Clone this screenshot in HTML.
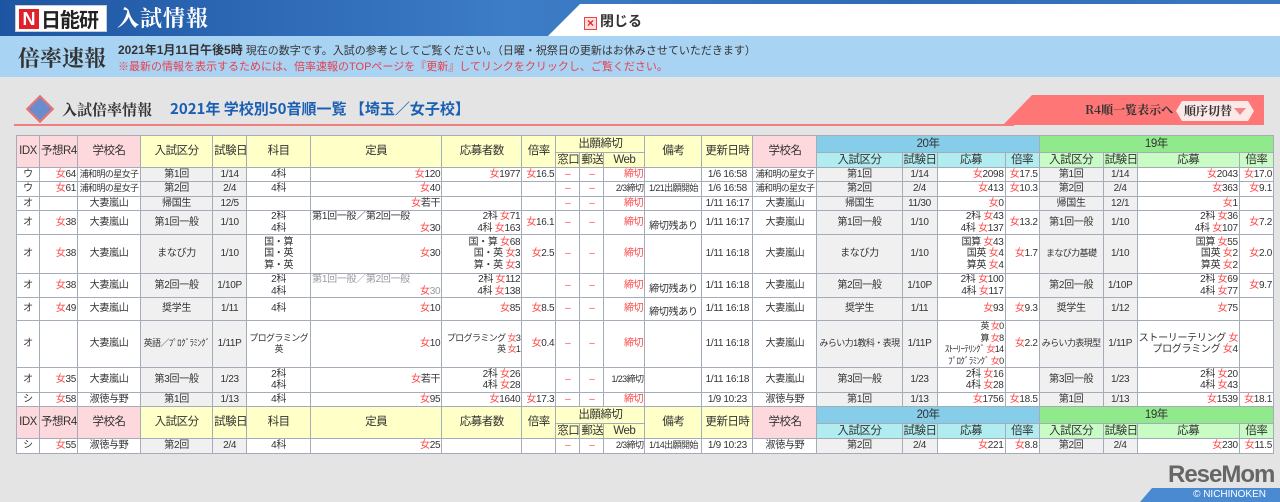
<!DOCTYPE html>
<html><head><meta charset="utf-8">
<style>
*{margin:0;padding:0;box-sizing:border-box}
body{width:1280px;height:502px;overflow:hidden;background:#e4e4e4;font-family:"Liberation Sans","Noto Sans CJK JP",sans-serif;color:#333;position:relative}
.top{position:absolute;left:0;top:0;width:1280px;height:36px;background:linear-gradient(90deg,#1d55a3,#3d7cc6 40%,#2f6bb6 70%,#3b78c2)}
.logo{position:absolute;left:15px;top:5px;width:92px;height:27px;background:#fff;border:1px solid #ccc}
.logo .n{position:absolute;left:3px;top:3px;width:20px;height:20px;background:#e0202a;color:#fff;font:bold 18px/20px "Liberation Sans",sans-serif;text-align:center}
.logo .t{position:absolute;left:25px;top:1px;font:bold 20px/24px "Noto Sans CJK JP",sans-serif;color:#222;letter-spacing:-1px}
.ttl{position:absolute;left:117px;top:3px;color:#fff;font:bold 22px/30px "Noto Serif CJK SC","Noto Sans CJK JP",serif;letter-spacing:1px}
.tab{position:absolute;left:548px;top:4px;width:732px;height:32px;background:#fff;clip-path:polygon(32px 0,100% 0,100% 100%,0 100%)}
.close{position:absolute;left:584px;top:12px;font:bold 14px/18px "Noto Sans CJK JP",sans-serif;color:#333}
.close i{display:inline-block;width:13px;height:13px;border:1px solid #e44;background:#fdd;color:#e22;font:bold 12px/11px sans-serif;text-align:center;font-style:normal;vertical-align:-1px;margin-right:3px}
.band{position:absolute;left:0;top:36px;width:1280px;height:41px;background:#a9d3f3}
.bs{position:absolute;left:18px;top:44px;font:bold 22px/28px "Noto Serif CJK SC",serif;color:#333}
.l1{position:absolute;left:118px;top:43px;font-size:11px;line-height:14px;color:#333;white-space:nowrap}
.l1 b{font-size:12px}
.l2{position:absolute;left:118px;top:60px;font-size:11px;line-height:14px;color:#e8404f;white-space:nowrap}
.h2{position:absolute;left:30px;top:96px;white-space:nowrap}
.dia{position:absolute;left:0;top:3px;width:20px;height:20px;background:#6a8ccc;transform:rotate(45deg);border:2px solid #f07070}
.h2 .a{position:absolute;left:32px;top:3px;font:bold 15px/22px "Noto Serif CJK SC",serif;color:#333}
.h2 .b{position:absolute;left:140px;top:2px;font:bold 15px/22px "Noto Sans CJK JP",sans-serif;color:#1a5fb4}
.uline{position:absolute;left:14px;top:124px;width:1000px;height:2px;background:#f08080}
.ptab{position:absolute;left:1003px;top:95px;width:261px;height:30px;background:#ff7676;clip-path:polygon(29px 0,100% 0,100% 100%,0 100%)}
.ptab span{position:absolute;left:82px;top:7px;font:bold 12px/16px "Noto Serif CJK SC",serif;color:#333}
.btn{position:absolute;left:173px;top:6px;width:78px;height:20px;background:#fde8e8;clip-path:polygon(6px 0,calc(100% - 6px) 0,100% 50%,calc(100% - 6px) 100%,6px 100%,0 50%);font:bold 12px/20px "Noto Serif CJK SC",serif;color:#333;padding-left:8px}
.btn:after{content:"";position:absolute;right:8px;top:7px;border:6px solid transparent;border-top:7px solid #f08888;border-bottom:0}
table{position:absolute;left:16px;top:135px;border-collapse:collapse;table-layout:fixed;width:1258px;font-size:10px;line-height:11.5px;background:#fff;letter-spacing:-0.3px}
td,th{border:1px solid #a4acba;padding:0 1px;white-space:nowrap;overflow:hidden;text-align:center;font-weight:normal}
th{font-size:11.5px;line-height:13px;letter-spacing:-0.5px}
.pk{background:#fdd8dc}.yl{background:#ffffc8}.b1{background:#86cdea}.b2{background:#b0ecf0}.g1{background:#90ea8c}.g2{background:#c8fcc4}
.gr{background:#f0f0f0}
.r{color:#ff4a4a}
.rt{text-align:right}
.gy{color:#999}
.dt{text-align:left;vertical-align:top}
.bt{vertical-align:bottom;padding-bottom:2px}
.sm{font-size:9px;letter-spacing:-0.6px}
.rm{position:absolute;left:1168px;top:462px;font:bold 24px/26px "Liberation Sans",sans-serif;color:#666;letter-spacing:-1px}
.nk{position:absolute;left:1140px;top:488px;width:140px;height:14px;background:#4a8ad0;clip-path:polygon(12px 0,100% 0,100% 100%,0 100%);color:#fff;font-size:10px;line-height:14px;text-align:right;padding-right:14px}
</style></head><body>
<div class="top"></div>
<div class="logo"><div class="n">N</div><div class="t">日能研</div></div>
<div class="ttl">入試情報</div>
<div class="tab"></div>
<div class="close"><i>×</i>閉じる</div>
<div class="band"></div>
<div class="bs">倍率速報</div>
<div class="l1"><b>2021年1月11日午後5時</b> 現在の数字です。入試の参考としてご覧ください。（日曜・祝祭日の更新はお休みさせていただきます）</div>
<div class="l2">※最新の情報を表示するためには、倍率速報のTOPページを『更新』してリンクをクリックし、ご覧ください。</div>
<div class="h2"><div class="dia"></div><div class="a">入試倍率情報</div><div class="b">2021年 学校別50音順一覧 【埼玉／女子校】</div></div>
<div class="uline"></div>
<div class="ptab"><span>R4順一覧表示へ</span><div class="btn">順序切替</div></div>

<table>
<colgroup><col style="width:23px"><col style="width:38px"><col style="width:63px"><col style="width:72px"><col style="width:34px"><col style="width:64px"><col style="width:131px"><col style="width:80px"><col style="width:34px"><col style="width:24px"><col style="width:24px"><col style="width:41px"><col style="width:57px"><col style="width:51px"><col style="width:64px"><col style="width:85px"><col style="width:35px"><col style="width:68px"><col style="width:34px"><col style="width:64px"><col style="width:34px"><col style="width:102px"><col style="width:34px"></colgroup>
<tr style="height:17px"><th rowspan="2" class="pk">IDX</th><th rowspan="2" class="pk">予想R4</th><th rowspan="2" class="pk">学校名</th><th rowspan="2" class="yl">入試区分</th><th rowspan="2" class="yl">試験日</th><th rowspan="2" class="yl">科目</th><th rowspan="2" class="yl">定員</th><th rowspan="2" class="yl">応募者数</th><th rowspan="2" class="yl">倍率</th><th colspan="3" class="yl">出願締切</th><th rowspan="2" class="yl">備考</th><th rowspan="2" class="yl">更新日時</th><th rowspan="2" class="pk">学校名</th><th colspan="4" class="b1">20年</th><th colspan="4" class="g1">19年</th></tr>
<tr style="height:15px"><th class="yl">窓口</th><th class="yl">郵送</th><th class="yl">Web</th><th class="b2">入試区分</th><th class="b2">試験日</th><th class="b2">応募</th><th class="b2">倍率</th><th class="g2">入試区分</th><th class="g2">試験日</th><th class="g2">応募</th><th class="g2">倍率</th></tr>

<tr style="height:14px"><td>ウ</td><td class="rt"><span class="r">女</span>64</td><td class="sm">浦和明の星女子</td><td class="gr">第1回</td><td class="gr">1/14</td><td>4科</td><td class="rt"><span class="r">女</span>120</td><td class="rt"><span class="r">女</span>1977</td><td class="rt"><span class="r">女</span>16.5</td><td class="r">–</td><td class="r">–</td><td class="rt r">締切</td><td></td><td>1/6 16:58</td><td class="sm">浦和明の星女子</td><td class="gr">第1回</td><td class="gr">1/14</td><td class="rt"><span class="r">女</span>2098</td><td class="rt"><span class="r">女</span>17.5</td><td class="gr">第1回</td><td class="gr">1/14</td><td class="rt"><span class="r">女</span>2043</td><td class="rt"><span class="r">女</span>17.0</td></tr>
<tr style="height:15px"><td>ウ</td><td class="rt"><span class="r">女</span>61</td><td class="sm">浦和明の星女子</td><td class="gr">第2回</td><td class="gr">2/4</td><td>4科</td><td class="rt"><span class="r">女</span>40</td><td></td><td></td><td class="r">–</td><td class="r">–</td><td class="rt sm">2/3締切</td><td class="sm">1/21出願開始</td><td>1/6 16:58</td><td class="sm">浦和明の星女子</td><td class="gr">第2回</td><td class="gr">2/4</td><td class="rt"><span class="r">女</span>413</td><td class="rt"><span class="r">女</span>10.3</td><td class="gr">第2回</td><td class="gr">2/4</td><td class="rt"><span class="r">女</span>363</td><td class="rt"><span class="r">女</span>9.1</td></tr>
<tr style="height:14px"><td>オ</td><td></td><td>大妻嵐山</td><td class="gr">帰国生</td><td class="gr">12/5</td><td></td><td class="rt"><span class="r">女</span>若干</td><td></td><td></td><td class="r">–</td><td class="r">–</td><td class="rt r">締切</td><td></td><td>1/11 16:17</td><td>大妻嵐山</td><td class="gr">帰国生</td><td class="gr">11/30</td><td class="rt"><span class="r">女</span>0</td><td></td><td class="gr">帰国生</td><td class="gr">12/1</td><td class="rt"><span class="r">女</span>1</td><td></td></tr>
<tr style="height:24px"><td>オ</td><td class="rt"><span class="r">女</span>38</td><td>大妻嵐山</td><td class="gr">第1回一般</td><td class="gr">1/10</td><td>2科<br>4科</td><td class="dt">第1回一般／第2回一般<div class="rt"><span class="r">女</span>30</div></td><td class="rt">2科 <span class="r">女</span>71<br>4科 <span class="r">女</span>163</td><td class="rt"><span class="r">女</span>16.1</td><td class="r">–</td><td class="r">–</td><td class="rt r">締切</td><td class="bt">締切残あり</td><td>1/11 16:17</td><td>大妻嵐山</td><td class="gr">第1回一般</td><td class="gr">1/10</td><td class="rt">2科 <span class="r">女</span>43<br>4科 <span class="r">女</span>137</td><td class="rt"><span class="r">女</span>13.2</td><td class="gr">第1回一般</td><td class="gr">1/10</td><td class="rt">2科 <span class="r">女</span>36<br>4科 <span class="r">女</span>107</td><td class="rt"><span class="r">女</span>7.2</td></tr>
<tr style="height:39px"><td>オ</td><td class="rt"><span class="r">女</span>38</td><td>大妻嵐山</td><td class="gr">まなび力</td><td class="gr">1/10</td><td>国・算<br>国・英<br>算・英</td><td class="rt"><span class="r">女</span>30</td><td class="rt">国・算 <span class="r">女</span>68<br>国・英 <span class="r">女</span>3<br>算・英 <span class="r">女</span>3</td><td class="rt"><span class="r">女</span>2.5</td><td class="r">–</td><td class="r">–</td><td class="rt r">締切</td><td></td><td>1/11 16:18</td><td>大妻嵐山</td><td class="gr">まなび力</td><td class="gr">1/10</td><td class="rt">国算 <span class="r">女</span>43<br>国英 <span class="r">女</span>4<br>算英 <span class="r">女</span>4</td><td class="rt"><span class="r">女</span>1.7</td><td class="gr sm">まなび力基礎</td><td class="gr">1/10</td><td class="rt">国算 <span class="r">女</span>55<br>国英 <span class="r">女</span>2<br>算英 <span class="r">女</span>2</td><td class="rt"><span class="r">女</span>2.0</td></tr>
<tr style="height:24px"><td>オ</td><td class="rt"><span class="r">女</span>38</td><td>大妻嵐山</td><td class="gr">第2回一般</td><td class="gr">1/10P</td><td>2科<br>4科</td><td class="dt gy">第1回一般／第2回一般<div class="rt"><span class="r">女</span>30</div></td><td class="rt">2科 <span class="r">女</span>112<br>4科 <span class="r">女</span>138</td><td></td><td class="r">–</td><td class="r">–</td><td class="rt r">締切</td><td class="bt">締切残あり</td><td>1/11 16:18</td><td>大妻嵐山</td><td class="gr">第2回一般</td><td class="gr">1/10P</td><td class="rt">2科 <span class="r">女</span>100<br>4科 <span class="r">女</span>117</td><td></td><td class="gr">第2回一般</td><td class="gr">1/10P</td><td class="rt">2科 <span class="r">女</span>69<br>4科 <span class="r">女</span>77</td><td class="rt"><span class="r">女</span>9.7</td></tr>
<tr style="height:23px"><td>オ</td><td class="rt"><span class="r">女</span>49</td><td>大妻嵐山</td><td class="gr">奨学生</td><td class="gr">1/11</td><td>4科</td><td class="rt"><span class="r">女</span>10</td><td class="rt"><span class="r">女</span>85</td><td class="rt"><span class="r">女</span>8.5</td><td class="r">–</td><td class="r">–</td><td class="rt r">締切</td><td class="bt">締切残あり</td><td>1/11 16:18</td><td>大妻嵐山</td><td class="gr">奨学生</td><td class="gr">1/11</td><td class="rt"><span class="r">女</span>93</td><td class="rt"><span class="r">女</span>9.3</td><td class="gr">奨学生</td><td class="gr">1/12</td><td class="rt"><span class="r">女</span>75</td><td></td></tr>
<tr style="height:47px"><td>オ</td><td></td><td>大妻嵐山</td><td class="gr sm">英語／ﾌﾟﾛｸﾞﾗﾐﾝｸﾞ</td><td class="gr">1/11P</td><td class="sm">プログラミング<br>英</td><td class="rt"><span class="r">女</span>10</td><td class="rt sm">プログラミング <span class="r">女</span>3<br>英 <span class="r">女</span>1</td><td class="rt"><span class="r">女</span>0.4</td><td class="r">–</td><td class="r">–</td><td class="rt r">締切</td><td></td><td>1/11 16:18</td><td>大妻嵐山</td><td class="gr sm">みらい力1教科・表現</td><td class="gr">1/11P</td><td class="rt sm">英 <span class="r">女</span>0<br>算 <span class="r">女</span>8<br>ｽﾄｰﾘｰﾃﾘﾝｸﾞ <span class="r">女</span>14<br>ﾌﾟﾛｸﾞﾗﾐﾝｸﾞ <span class="r">女</span>0</td><td class="rt"><span class="r">女</span>2.2</td><td class="gr sm">みらい力表現型</td><td class="gr">1/11P</td><td class="rt">ストーリーテリング <span class="r">女</span>12<br>プログラミング <span class="r">女</span>4</td><td></td></tr>
<tr style="height:25px"><td>オ</td><td class="rt"><span class="r">女</span>35</td><td>大妻嵐山</td><td class="gr">第3回一般</td><td class="gr">1/23</td><td>2科<br>4科</td><td class="rt"><span class="r">女</span>若干</td><td class="rt">2科 <span class="r">女</span>26<br>4科 <span class="r">女</span>28</td><td></td><td class="r">–</td><td class="r">–</td><td class="rt sm">1/23締切</td><td></td><td>1/11 16:18</td><td>大妻嵐山</td><td class="gr">第3回一般</td><td class="gr">1/23</td><td class="rt">2科 <span class="r">女</span>16<br>4科 <span class="r">女</span>28</td><td></td><td class="gr">第3回一般</td><td class="gr">1/23</td><td class="rt">2科 <span class="r">女</span>20<br>4科 <span class="r">女</span>43</td><td></td></tr>
<tr style="height:14px"><td>シ</td><td class="rt"><span class="r">女</span>58</td><td>淑徳与野</td><td class="gr">第1回</td><td class="gr">1/13</td><td>4科</td><td class="rt"><span class="r">女</span>95</td><td class="rt"><span class="r">女</span>1640</td><td class="rt"><span class="r">女</span>17.3</td><td class="r">–</td><td class="r">–</td><td class="rt r">締切</td><td></td><td>1/9 10:23</td><td>淑徳与野</td><td class="gr">第1回</td><td class="gr">1/13</td><td class="rt"><span class="r">女</span>1756</td><td class="rt"><span class="r">女</span>18.5</td><td class="gr">第1回</td><td class="gr">1/13</td><td class="rt"><span class="r">女</span>1539</td><td class="rt"><span class="r">女</span>18.1</td></tr>
<tr style="height:17px"><th rowspan="2" class="pk">IDX</th><th rowspan="2" class="pk">予想R4</th><th rowspan="2" class="pk">学校名</th><th rowspan="2" class="yl">入試区分</th><th rowspan="2" class="yl">試験日</th><th rowspan="2" class="yl">科目</th><th rowspan="2" class="yl">定員</th><th rowspan="2" class="yl">応募者数</th><th rowspan="2" class="yl">倍率</th><th colspan="3" class="yl">出願締切</th><th rowspan="2" class="yl">備考</th><th rowspan="2" class="yl">更新日時</th><th rowspan="2" class="pk">学校名</th><th colspan="4" class="b1">20年</th><th colspan="4" class="g1">19年</th></tr>
<tr style="height:15px"><th class="yl">窓口</th><th class="yl">郵送</th><th class="yl">Web</th><th class="b2">入試区分</th><th class="b2">試験日</th><th class="b2">応募</th><th class="b2">倍率</th><th class="g2">入試区分</th><th class="g2">試験日</th><th class="g2">応募</th><th class="g2">倍率</th></tr>
<tr style="height:15px"><td>シ</td><td class="rt"><span class="r">女</span>55</td><td>淑徳与野</td><td class="gr">第2回</td><td class="gr">2/4</td><td>4科</td><td class="rt"><span class="r">女</span>25</td><td></td><td></td><td class="r">–</td><td class="r">–</td><td class="rt sm">2/3締切</td><td class="sm">1/14出願開始</td><td>1/9 10:23</td><td>淑徳与野</td><td class="gr">第2回</td><td class="gr">2/4</td><td class="rt"><span class="r">女</span>221</td><td class="rt"><span class="r">女</span>8.8</td><td class="gr">第2回</td><td class="gr">2/4</td><td class="rt"><span class="r">女</span>230</td><td class="rt"><span class="r">女</span>11.5</td></tr>
</table>
<div class="rm">ReseMom</div>
<div class="nk">© NICHINOKEN</div>
</body></html>
